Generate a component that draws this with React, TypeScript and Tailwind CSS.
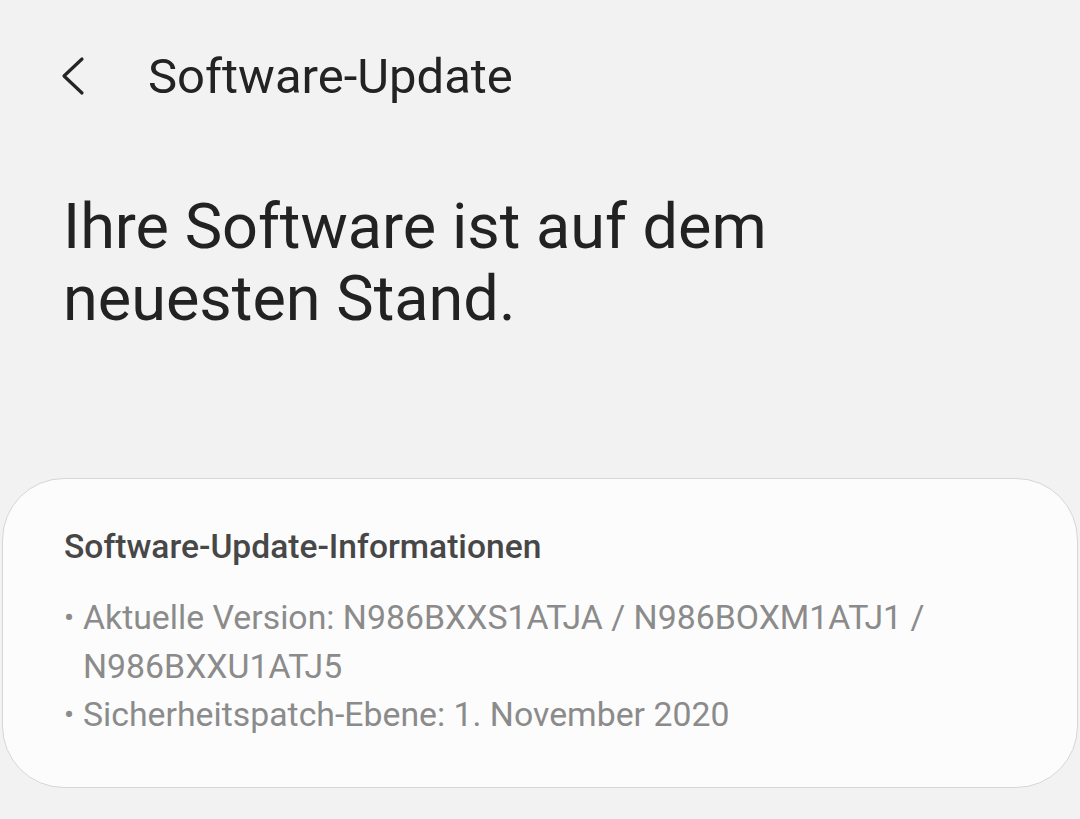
export default function App() {
  return (
    <div
      className="w-[1080px] h-[819px] bg-[#f2f2f2] overflow-hidden flex flex-col"
      style={{ fontFamily: 'Roboto, "Noto Sans", sans-serif' }}
    >
      <div className="flex items-center h-[152px]">
        <div className="w-[148px] h-full flex items-center pl-[58px]">
          <svg width="30" height="42" viewBox="0 0 30 42">
            <path d="M24 4 L6 21 L24 38" fill="none" stroke="#252525" strokeWidth="3.2" strokeLinecap="round" strokeLinejoin="round" />
          </svg>
        </div>
        <h1 className="text-[49px] text-[#232323] leading-none">Software-Update</h1>
      </div>
      <div className="pl-[63px] pt-[39px] text-[63px] leading-[72px] text-[#222222]">
        <p>Ihre Software ist auf dem</p>
        <p>neuesten Stand.</p>
      </div>
      <div className="mt-[143px] mx-[2px] h-[310px] rounded-[62px] border border-[#d6d6d6] bg-[#fcfcfc] pl-[61px] pt-[46px]">
        <h2 className="text-[33.6px] font-medium text-[#474747] leading-[44px]">Software-Update-Informationen</h2>
        <ul className="mt-[25px] text-[33.8px] leading-[48.5px] text-[#8b8b8b]">
          <li className="flex">
            <span className="w-[19px] shrink-0 text-[30px]">•</span>
            <span className="w-[900px]">Aktuelle Version: N986BXXS1ATJA / N986BOXM1ATJ1 / N986BXXU1ATJ5</span>
          </li>
          <li className="flex">
            <span className="w-[19px] shrink-0 text-[30px]">•</span>
            <span>Sicherheitspatch-Ebene: 1. November 2020</span>
          </li>
        </ul>
      </div>
    </div>
  )
}
